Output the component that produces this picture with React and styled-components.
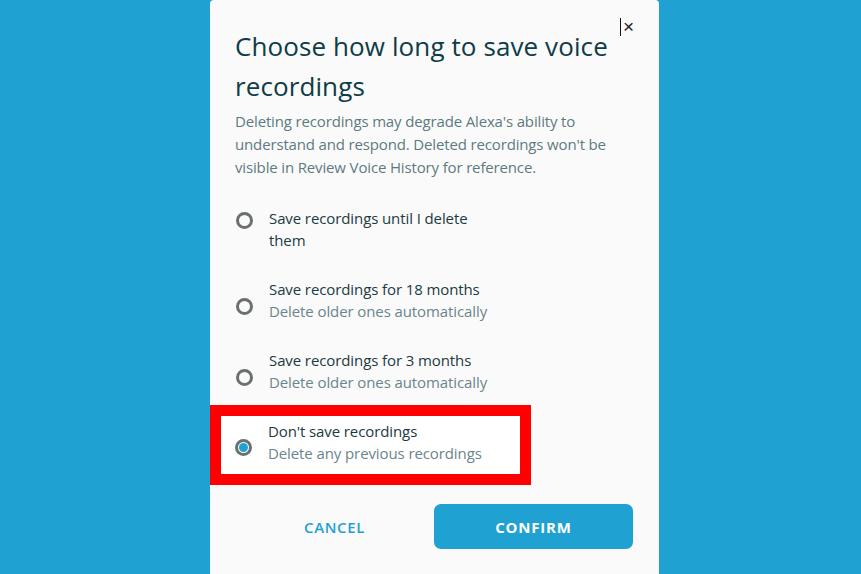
import React from 'react';
import styled, { createGlobalStyle } from 'styled-components';

const GlobalStyle = createGlobalStyle`
  html, body {
    margin: 0;
    padding: 0;
    background: #1fa1d1;
    font-family: "Open Sans", "Noto Sans", sans-serif;
  }
`;

const Page = styled.div`
  width: 861px;
  height: 574px;
  overflow: hidden;
`;

const Modal = styled.div`
  position: relative;
  box-sizing: border-box;
  width: 449px;
  height: 600px;
  margin-left: 210px;
  padding: 26px 26px 0 25px;
  background: #fafafa;
  border-radius: 4px;
`;

const Close = styled.button`
  position: absolute;
  top: 18px;
  right: 25px;
  display: flex;
  align-items: center;
  height: 18px;
  padding: 0 0 0 2px;
  border: none;
  border-left: 1px solid #111;
  background: none;
  color: #222;
  font-size: 19px;
  line-height: 18px;
  cursor: pointer;
`;

const Title = styled.h1`
  margin: 0;
  font-size: 26px;
  font-weight: 400;
  line-height: 40px;
  color: #0e3c47;
  letter-spacing: 0.1px;
`;

const Intro = styled.p`
  margin: 4px 0 0;
  font-size: 15px;
  line-height: 23px;
  letter-spacing: -0.15px;
  color: #5d7a81;
`;

const Options = styled.div`
  display: flex;
  flex-direction: column;
  gap: 27px;
  margin-top: 28px;
`;

const Option = styled.label`
  display: flex;
  align-items: flex-start;
  gap: 16px;
  cursor: pointer;
  ${p => p.highlighted && `
    background: #ffffff;
    border: 11px solid #ff0000;
    width: 286px;
    margin: -15px 0 -21px -25px;
    padding: 4px 0 10px 13px;
  `}
`;

const Radio = styled.span`
  flex: none;
  box-sizing: border-box;
  width: 17px;
  height: 17px;
  margin-top: ${p => p.offset}px;
  margin-left: 1px;
  border: 3px solid #6a7070;
  border-radius: 50%;
  display: flex;
  align-items: center;
  justify-content: center;

  &::after {
    content: '';
    width: 9px;
    height: 9px;
    border-radius: 50%;
    background: ${p => (p.checked ? '#1fa1d1' : 'transparent')};
  }
`;

const OptionText = styled.div`
  max-width: 232px;
  font-size: 15px;
  line-height: 22px;
  letter-spacing: -0.1px;
`;

const OptionTitle = styled.div`
  color: #1c3a42;
`;

const OptionDesc = styled.div`
  color: #6a858b;
`;

const Actions = styled.div`
  display: grid;
  grid-template-columns: 1fr 1fr;
  margin-top: 40px;
`;

const Button = styled.button`
  height: 45px;
  border: none;
  border-radius: 7px;
  background: ${p => (p.primary ? '#1fa1d1' : 'transparent')};
  color: ${p => (p.primary ? '#ffffff' : '#1fa1d1')};
  font-family: inherit;
  font-size: 15px;
  font-weight: ${p => (p.primary ? 700 : 600)};
  letter-spacing: ${p => (p.primary ? '0.8px' : '0.6px')};
  cursor: pointer;
`;

const options = [
  { title: 'Save recordings until I delete them', offset: 5 },
  { title: 'Save recordings for 18 months', desc: 'Delete older ones automatically', offset: 20 },
  { title: 'Save recordings for 3 months', desc: 'Delete older ones automatically', offset: 20 },
  { title: "Don't save recordings", desc: 'Delete any previous recordings', offset: 19, checked: true },
];

export default function App() {
  return (
    <Page>
      <GlobalStyle />
      <Modal>
        <Close aria-label="Close">×</Close>
        <Title>Choose how long to save voice recordings</Title>
        <Intro>
          Deleting recordings may degrade Alexa's ability to understand and respond. Deleted
          recordings won't be visible in Review Voice History for reference.
        </Intro>
        <Options>
          {options.map(o => (
            <Option key={o.title} highlighted={o.checked}>
              <Radio offset={o.offset} checked={o.checked} />
              <OptionText>
                <OptionTitle>{o.title}</OptionTitle>
                {o.desc && <OptionDesc>{o.desc}</OptionDesc>}
              </OptionText>
            </Option>
          ))}
        </Options>
        <Actions>
          <Button>CANCEL</Button>
          <Button primary>CONFIRM</Button>
        </Actions>
      </Modal>
    </Page>
  );
}
